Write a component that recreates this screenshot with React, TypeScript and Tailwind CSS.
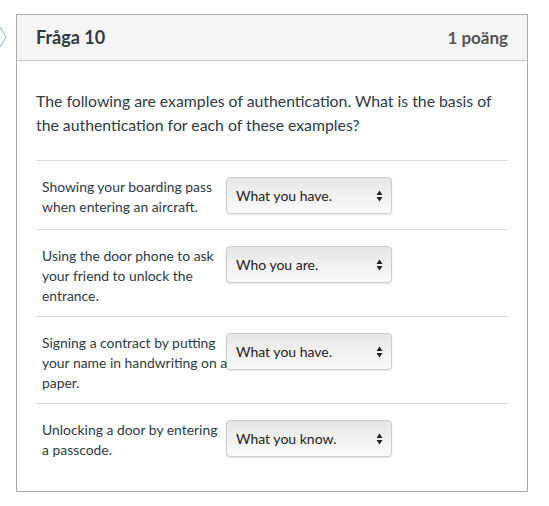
const rows = [
  { text: "Showing your boarding pass when entering an aircraft.", value: "What you have." },
  { text: "Using the door phone to ask your friend to unlock the entrance.", value: "Who you are." },
  { text: "Signing a contract by putting your name in handwriting on a paper.", value: "What you have." },
  { text: "Unlocking a door by entering a\u00a0passcode.", value: "What you know." },
];

function Arrows() {
  return (
    <svg width="7" height="12" viewBox="0 0 7 12" className="shrink-0">
      <path d="M3.5 0.5 L6.5 5 L0.5 5 Z" fill="#222" />
      <path d="M3.5 11.5 L6.5 7 L0.5 7 Z" fill="#222" />
    </svg>
  );
}

export default function App() {
  return (
    <div className="relative w-[549px] h-[506px] bg-white font-['Lato',sans-serif] text-[#2d3b45]">
      {/* side chevron, mostly cut off */}
      <svg width="8" height="22" viewBox="0 0 8 22" className="absolute left-0 top-[26px]">
        <path d="M0 1 L6 11 L0 21" fill="none" stroke="#9ec3dd" strokeWidth="1.2" />
      </svg>

      <div className="pt-[14px] pl-4">
        <div className="w-[512px] border border-[#aaa]">
          <div className="h-[46px] flex items-center justify-between px-[19px] bg-[#f5f5f5] border-b border-[#c7cdd1]">
            <h2 className="text-[18px] font-bold">Fråga 10</h2>
            <span className="text-[17px] font-bold text-[#555]">1 poäng</span>
          </div>

          <div className="px-[19px] pt-[28px] pb-[19px]">
            <p className="text-[15.8px] leading-6 pb-[23px] border-b border-[#ddd]">
              The following are examples of authentication. What is the basis of the authentication for each of these examples?
            </p>

            {rows.map((row, i) => (
              <div
                key={i}
                className={`flex items-start pl-[6px] pt-4 pb-[10px] ${i < rows.length - 1 ? "border-b border-[#ddd]" : ""}`}
              >
                <div className="relative z-10 w-[187px] text-[13.9px] leading-5">{row.text}</div>
                <div className="-ml-[3px] w-[166px] h-[37px] mb-[5px] flex items-center justify-between pl-[9px] pr-[8px] rounded border border-[#ccc] bg-gradient-to-b from-[#e6e6e6] to-[#fbfbfb] shadow-[0_1px_2px_rgba(0,0,0,0.12)] text-[14px] text-[#222]">
                  <span>{row.value}</span>
                  <Arrows />
                </div>
              </div>
            ))}
          </div>
        </div>
      </div>
    </div>
  );
}
